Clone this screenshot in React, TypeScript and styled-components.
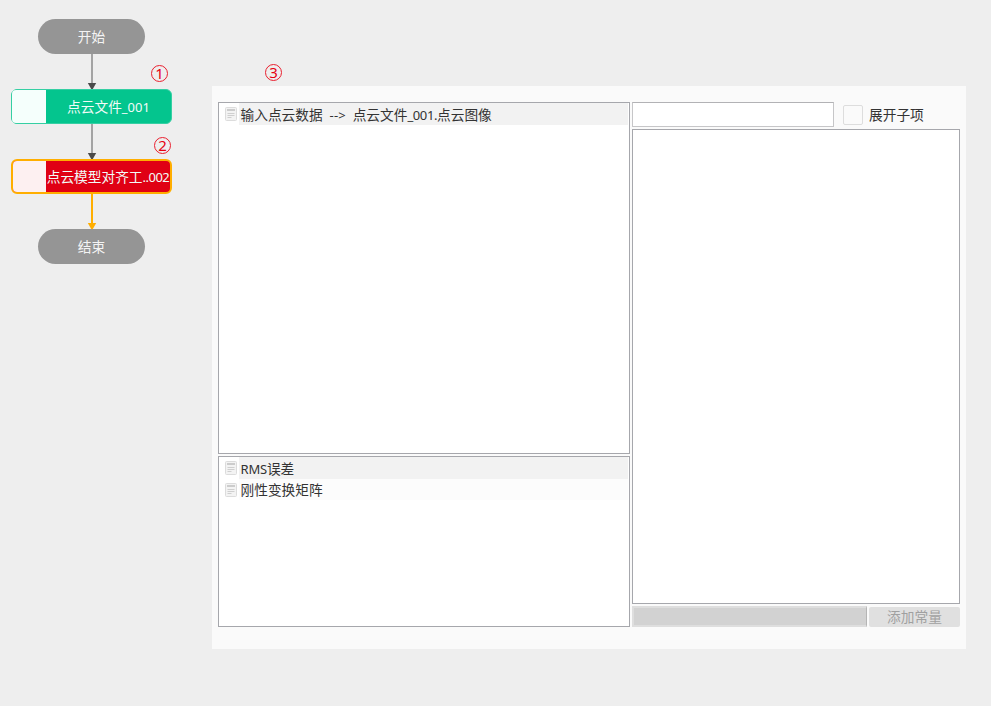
import React from "react";
import styled, { createGlobalStyle } from "styled-components";

const GlobalStyle = createGlobalStyle`
  *, *::before, *::after { box-sizing: border-box; }
  body {
    margin: 0;
    background: #eeeeee;
    font-family: "Noto Sans", "Noto Sans CJK SC", sans-serif;
    font-size: 13.7px;
    color: #333333;
  }
`;

const Page = styled.div`
  display: flex;
  align-items: flex-start;
  width: 991px;
  height: 706px;
  overflow: hidden;
  background: #eeeeee;
`;

const Flow = styled.div`
  display: flex;
  flex-direction: column;
  align-items: flex-start;
  width: 161px;
  margin: 19px 40px 0 11px;
`;

const Pill = styled.div`
  display: flex;
  align-items: center;
  justify-content: center;
  width: 107px;
  height: 35px;
  margin-left: 27px;
  border-radius: 18px;
  background: #959595;
  color: #f4f4f4;
  line-height: 20px;
  padding-top: 1px;
`;

const Connector = styled.svg`
  display: block;
  width: 10px;
  height: 35px;
  margin-left: 76px;
`;

const Step = styled.div<{ $fill: string; $edge: string; $edgeWidth: number }>`
  position: relative;
  display: flex;
  width: 161px;
  height: 35px;
  border: ${(p) => p.$edgeWidth}px solid ${(p) => p.$edge};
  border-radius: 6px;
  background: ${(p) => p.$fill};
`;

const StepIcon = styled.div<{ $tint: string; $width: number }>`
  flex: none;
  width: ${(p) => p.$width}px;
  border-radius: 4px 0 0 4px;
  background: ${(p) => p.$tint};
`;

const StepName = styled.div`
  display: flex;
  flex: 1;
  align-items: center;
  justify-content: center;
  color: #f2fbf8;
  line-height: 20px;
  white-space: nowrap;
  padding-top: 1px;
`;

const Latin = styled.span<{ $spacing?: number }>`
  font-size: 13px;
  letter-spacing: ${(p) => p.$spacing ?? 0}px;
  white-space: pre;
`;

const Marker = styled.span<{ $left: number; $top: number }>`
  position: absolute;
  left: ${(p) => p.$left}px;
  top: ${(p) => p.$top}px;
  display: flex;
  align-items: center;
  justify-content: center;
  width: 17px;
  height: 17px;
  border: 1px solid #ea1f2e;
  border-radius: 50%;
  color: #e60012;
  font-size: 15px;
  line-height: 15px;
`;

const Panel = styled.section`
  position: relative;
  display: grid;
  grid-template-columns: 412px 328px;
  column-gap: 2px;
  width: 754px;
  height: 563px;
  margin-top: 86px;
  padding: 16px 6px 22px;
  background: #fafafa;
`;

const Column = styled.div`
  display: flex;
  flex-direction: column;
  gap: 2px;
`;

const List = styled.div<{ $height: number }>`
  height: ${(p) => p.$height}px;
  border: 1px solid #a6a7ac;
  background: #ffffff;
`;

const Item = styled.div<{ $shade: string; $height: number }>`
  display: flex;
  align-items: center;
  height: ${(p) => p.$height}px;
  padding-left: 6px;
  background: linear-gradient(${(p) => p.$shade}, ${(p) => p.$shade}) 20px 0 / 389px 100% no-repeat;
`;

const ItemText = styled.span`
  display: block;
  margin-left: 3.5px;
  padding-top: 1px;
  line-height: 20px;
  white-space: pre;
`;

const SearchRow = styled.div`
  display: flex;
  align-items: center;
  height: 25px;
`;

const SearchInput = styled.input`
  width: 202px;
  height: 25px;
  padding: 0 4px;
  border: 1px solid #c6c6c8;
  border-top-color: #b2b2b5;
  background: #ffffff;
  outline: none;
`;

const CheckBox = styled.span`
  width: 20px;
  height: 20px;
  margin-left: 9px;
  border: 1px solid #dddddd;
  border-radius: 2px;
  background: #fafafa;
`;

const CheckLabel = styled.span`
  margin-left: 6px;
  line-height: 20px;
`;

const ConstantRow = styled.div`
  display: flex;
  gap: 2px;
  height: 21px;
`;

const ConstantField = styled.div`
  width: 235px;
  height: 21px;
  border: 2px solid #dedede;
  border-right: 1px solid #b5b5b5;
  background: #d2d2d2;
`;

const AddButton = styled.button`
  width: 91px;
  height: 20px;
  margin-top: 1px;
  padding: 0;
  border: 0;
  border-radius: 2px;
  background: #e0e0e0;
  color: #a0a0a0;
  font: inherit;
  line-height: 20px;
`;

function Arrow({ line, head }: { line: string; head: string }) {
  return (
    <Connector viewBox="0 0 10 35">
      <path d="M5 0V31" stroke={line} strokeWidth="2" />
      <path d="M0.8 29H9.2L5.8 35H4.2Z" fill={head} />
    </Connector>
  );
}

function DocIcon() {
  return (
    <svg width="12" height="14" viewBox="0 0 12 14" fill="none">
      <rect x="0.5" y="0.5" width="11" height="13" rx="1" fill="#f3f3f3" stroke="#dcdcdc" />
      <path d="M2 3H10" stroke="#cccccc" strokeWidth="2" />
      <path d="M2.5 6.5H9.5M2.5 8.5H9.5M2.5 10.5H6.5" stroke="#cfcfcf" />
    </svg>
  );
}

export default function App() {
  return (
    <>
      <GlobalStyle />
      <Page>
        <Flow>
          <Pill>开始</Pill>
          <Arrow line="#a3a3a3" head="#4a4a4a" />
          <Step $fill="#04c58e" $edge="#35cfa3" $edgeWidth={1}>
            <StepIcon $tint="#f5fffc" $width={34} />
            <StepName>点云文件<Latin>_001</Latin></StepName>
            <Marker $left={139} $top={-25}>1</Marker>
          </Step>
          <Arrow line="#a3a3a3" head="#4a4a4a" />
          <Step $fill="#e00014" $edge="#ffae00" $edgeWidth={2}>
            <StepIcon $tint="#fdf0f1" $width={33} />
            <StepName>点云模型对齐工<Latin $spacing={-0.5}>..002</Latin></StepName>
            <Marker $left={141} $top={-24}>2</Marker>
          </Step>
          <Arrow line="#ffae00" head="#ffae00" />
          <Pill>结束</Pill>
        </Flow>
        <Panel>
          <Marker $left={53} $top={-22}>3</Marker>
          <Column>
            <List $height={352}>
              <Item $shade="#f2f2f2" $height={22}>
                <DocIcon />
                <ItemText>
                  输入点云数据<Latin $spacing={0.1}>{"  -->  "}</Latin>点云文件<Latin $spacing={-0.4}>_001.</Latin>点云图像
                </ItemText>
              </Item>
            </List>
            <List $height={171}>
              <Item $shade="#f2f2f2" $height={22}>
                <DocIcon />
                <ItemText><Latin $spacing={-0.2}>RMS</Latin>误差</ItemText>
              </Item>
              <Item $shade="#fcfcfc" $height={21}>
                <DocIcon />
                <ItemText>刚性变换矩阵</ItemText>
              </Item>
            </List>
          </Column>
          <Column>
            <SearchRow>
              <SearchInput />
              <CheckBox />
              <CheckLabel>展开子项</CheckLabel>
            </SearchRow>
            <List $height={475} />
            <ConstantRow>
              <ConstantField />
              <AddButton disabled>添加常量</AddButton>
            </ConstantRow>
          </Column>
        </Panel>
      </Page>
    </>
  );
}
